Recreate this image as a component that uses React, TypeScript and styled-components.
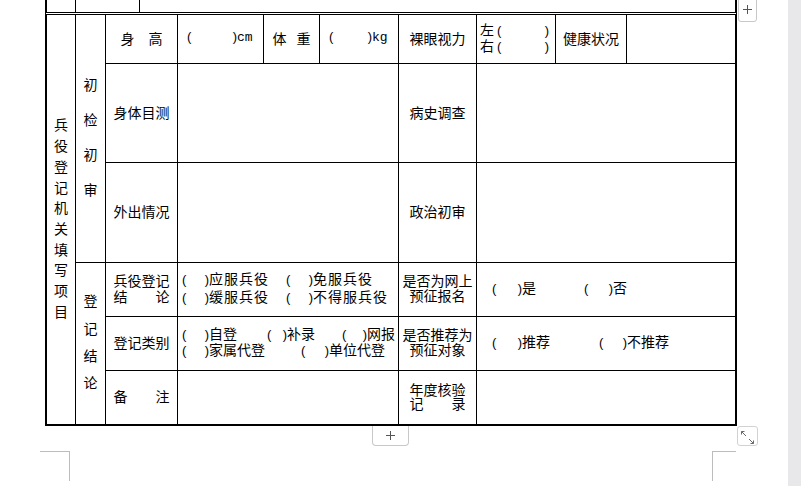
import React from 'react';
import styled, { createGlobalStyle } from 'styled-components';

const GlobalStyle = createGlobalStyle`
  html, body { margin: 0; padding: 0; background: #fff; }
  body {
    font-family: "Noto Sans CJK SC", "Noto Sans", sans-serif;
    color: #000;
  }
`;

const Frame = styled.div`
  display: flex;
  width: 801px;
  height: 486px;
  overflow: hidden;
  background: #fff;
`;

const Canvas = styled.div`
  position: relative;
  flex: 1;
  padding-left: 45px;
`;

const Scrollbar = styled.div`
  width: 13px;
  flex: none;
  background: #e8e8eb;
`;

const Doc = styled.div`
  width: 692px;
`;

const Stub = styled.div`
  display: flex;
  height: 15px;
  box-sizing: border-box;
  border-left: 2px solid #000;
  border-right: 2px solid #000;
  border-bottom: 3px double #000;
`;

const StubCell = styled.div<{ $w?: number }>`
  box-sizing: border-box;
  ${({ $w }) => ($w ? `width: ${$w}px; flex: none; border-right: 1px solid #000;` : 'flex: 1;')}
`;

const Sheet = styled.div`
  display: grid;
  grid-template-columns: 29px 30px 72px 86px 56px 79px 78px 79px 71px 108px;
  grid-template-rows: 49px 99px 100px 54px 54px 53px;
  width: 692px;
  box-sizing: border-box;
  border-left: 2px solid #000;
  border-right: 2px solid #000;
  border-bottom: 2px solid #000;
`;

const Cell = styled.div<{ $c: string; $r: string; $noR?: boolean; $noB?: boolean; $left?: boolean }>`
  grid-column: ${(p) => p.$c};
  grid-row: ${(p) => p.$r};
  box-sizing: border-box;
  padding-bottom: 3px;
  border-right: ${(p) => (p.$noR ? 'none' : '1px solid #000')};
  border-bottom: ${(p) => (p.$noB ? 'none' : '1px solid #000')};
  display: flex;
  align-items: center;
  justify-content: ${(p) => (p.$left ? 'flex-start' : 'center')};
  font-size: 14px;
  white-space: nowrap;
  overflow: hidden;
`;

const Label = styled.div<{ $lh?: number }>`
  display: flex;
  flex-direction: column;
  align-items: center;
  line-height: ${(p) => p.$lh ?? 20}px;
`;

const VText = styled.div<{ $lh: number }>`
  width: 14px;
  white-space: normal;
  word-break: break-all;
  text-align: center;
  line-height: ${(p) => p.$lh}px;
`;

const Choices = styled.div<{ $pad: number; $lh: number; $ls?: number }>`
  display: flex;
  flex-direction: column;
  padding-left: ${(p) => p.$pad}px;
  line-height: ${(p) => p.$lh}px;
  letter-spacing: ${(p) => p.$ls ?? 0}px;
`;

const Line = styled.div`
  display: flex;
  align-items: baseline;
`;

const Paren = styled.span<{ $w: number }>`
  display: inline-flex;
  flex: none;
  justify-content: space-between;
  width: ${(p) => p.$w}px;
  letter-spacing: 0;
  font-family: "Liberation Sans", sans-serif;
  font-size: 13px;
`;

const Gap = styled.span<{ $w: number }>`
  display: inline-block;
  flex: none;
  width: ${(p) => p.$w}px;
`;

const Unit = styled.span`
  font-family: "Liberation Mono", monospace;
  font-size: 13px;
`;

const ColAdd = styled.div`
  position: absolute;
  left: 738px;
  top: -15px;
  width: 19px;
  height: 37px;
  box-sizing: border-box;
  border: 1px solid #c8c8c8;
  border-radius: 3px;
  background: #fff;
  display: flex;
  align-items: center;
  justify-content: center;
`;

const RowAdd = styled.div`
  position: absolute;
  left: 372px;
  top: 426px;
  width: 37px;
  height: 20px;
  box-sizing: border-box;
  border: 1px solid #c8c8c8;
  border-top: none;
  border-radius: 0 0 4px 4px;
  background: #fff;
  display: flex;
  align-items: center;
  justify-content: center;
`;

const Resize = styled.div`
  position: absolute;
  left: 737px;
  top: 426px;
  width: 21px;
  height: 20px;
  box-sizing: border-box;
  border: 1px solid #d2d2d2;
  border-radius: 3px;
  background: #fff;
`;

const CropMark = styled.div<{ $side: 'left' | 'right' }>`
  position: absolute;
  top: 451px;
  height: 30px;
  box-sizing: border-box;
  border-top: 1px solid #bcbcbc;
  ${(p) =>
    p.$side === 'left'
      ? 'left: 40px; width: 30px; border-right: 1px solid #bcbcbc;'
      : 'left: 712px; width: 24px; border-left: 1px solid #bcbcbc;'}
`;

const PlusSlot = styled.span`
  display: flex;
  margin-top: 12px;
`;

const P = ({ w }: { w: number }) => (
  <Paren $w={w}>
    <span>(</span>
    <span>)</span>
  </Paren>
);

const Plus = () => (
  <svg width="9" height="9" viewBox="0 0 9 9">
    <path d="M0 4.5H9M4.5 0V9" stroke="#555" strokeWidth="1" />
  </svg>
);

export default function App() {
  return (
    <>
      <GlobalStyle />
      <Frame>
        <Canvas>
          <Doc>
            <Stub>
              <StubCell $w={29} />
              <StubCell $w={64} />
              <StubCell />
            </Stub>
            <Sheet>
              <Cell $c="1" $r="1 / 7" $noB>
                <VText $lh={20.7}>兵役登记机关填写项目</VText>
              </Cell>
              <Cell $c="2" $r="1 / 4">
                <VText $lh={35}>初检初审</VText>
              </Cell>
              <Cell $c="2" $r="4 / 7" $noB>
                <VText $lh={27.3}>登记结论</VText>
              </Cell>

              {/* row 1 */}
              <Cell $c="3" $r="1">
                <Label>身　高</Label>
              </Cell>
              <Cell $c="4" $r="1" $left>
                <Choices $pad={9} $lh={20}>
                  <Line>
                    <P w={50} />
                    <Unit>cm</Unit>
                  </Line>
                </Choices>
              </Cell>
              <Cell $c="5" $r="1">
                <Line>
                  体<Gap $w={10} />重
                </Line>
              </Cell>
              <Cell $c="6" $r="1" $left>
                <Choices $pad={9} $lh={20}>
                  <Line>
                    <P w={43} />
                    <Unit>kg</Unit>
                  </Line>
                </Choices>
              </Cell>
              <Cell $c="7" $r="1">
                <Label>裸眼视力</Label>
              </Cell>
              <Cell $c="8" $r="1" $left>
                <Choices $pad={3} $lh={14}>
                  <Line>
                    左<Gap $w={3} />
                    <P w={52} />
                  </Line>
                  <Line>
                    右<Gap $w={3} />
                    <P w={52} />
                  </Line>
                </Choices>
              </Cell>
              <Cell $c="9" $r="1">
                <Label>健康状况</Label>
              </Cell>
              <Cell $c="10" $r="1" $noR />

              {/* row 2 */}
              <Cell $c="3" $r="2">
                <Label>身体目测</Label>
              </Cell>
              <Cell $c="4 / 7" $r="2" />
              <Cell $c="7" $r="2">
                <Label>病史调查</Label>
              </Cell>
              <Cell $c="8 / 11" $r="2" $noR />

              {/* row 3 */}
              <Cell $c="3" $r="3">
                <Label>外出情况</Label>
              </Cell>
              <Cell $c="4 / 7" $r="3" />
              <Cell $c="7" $r="3">
                <Label>政治初审</Label>
              </Cell>
              <Cell $c="8 / 11" $r="3" $noR />

              {/* row 4 */}
              <Cell $c="3" $r="4">
                <Label $lh={16}>
                  <span>兵役登记</span>
                  <span>结　　论</span>
                </Label>
              </Cell>
              <Cell $c="4 / 7" $r="4" $left>
                <Choices $pad={4} $lh={16} $ls={1}>
                  <Line>
                    <P w={27} />
                    应服兵役
                    <Gap $w={17} />
                    <P w={27} />
                    免服兵役
                  </Line>
                  <Line>
                    <P w={27} />
                    缓服兵役
                    <Gap $w={17} />
                    <P w={27} />
                    不得服兵役
                  </Line>
                </Choices>
              </Cell>
              <Cell $c="7" $r="4">
                <Label $lh={15}>
                  <span>是否为网上</span>
                  <span>预征报名</span>
                </Label>
              </Cell>
              <Cell $c="8 / 11" $r="4" $noR $left>
                <Choices $pad={15} $lh={20}>
                  <Line>
                    <P w={30} />
                    是
                    <Gap $w={48} />
                    <P w={29} />
                    否
                  </Line>
                </Choices>
              </Cell>

              {/* row 5 */}
              <Cell $c="3" $r="5">
                <Label>登记类别</Label>
              </Cell>
              <Cell $c="4 / 7" $r="5" $left>
                <Choices $pad={4} $lh={15}>
                  <Line>
                    <P w={27} />
                    自登
                    <Gap $w={30} />
                    <P w={20} />
                    补录
                    <Gap $w={27} />
                    <P w={25} />
                    网报
                  </Line>
                  <Line>
                    <P w={27} />
                    家属代登
                    <Gap $w={36} />
                    <P w={28} />
                    单位代登
                  </Line>
                </Choices>
              </Cell>
              <Cell $c="7" $r="5">
                <Label $lh={15}>
                  <span>是否推荐为</span>
                  <span>预征对象</span>
                </Label>
              </Cell>
              <Cell $c="8 / 11" $r="5" $noR $left>
                <Choices $pad={15} $lh={20}>
                  <Line>
                    <P w={30} />
                    推荐
                    <Gap $w={49} />
                    <P w={28} />
                    不推荐
                  </Line>
                </Choices>
              </Cell>

              {/* row 6 */}
              <Cell $c="3" $r="6" $noB>
                <Label>备　　注</Label>
              </Cell>
              <Cell $c="4 / 7" $r="6" $noB />
              <Cell $c="7" $r="6" $noB>
                <Label $lh={14}>
                  <span>年度核验</span>
                  <span>记　　录</span>
                </Label>
              </Cell>
              <Cell $c="8 / 11" $r="6" $noR $noB />
            </Sheet>
          </Doc>

          <ColAdd>
            <PlusSlot>
              <Plus />
            </PlusSlot>
          </ColAdd>
          <RowAdd>
            <Plus />
          </RowAdd>
          <Resize>
            <svg width="19" height="18" viewBox="0 0 19 18">
              <path
                d="M8 8L3.5 3.5M3.5 3.5V6.5M3.5 3.5H6.5M11 11L15.5 15.5M15.5 15.5V12.5M15.5 15.5H12.5"
                stroke="#6a6a6a"
                strokeWidth="1"
                fill="none"
              />
            </svg>
          </Resize>
          <CropMark $side="left" />
          <CropMark $side="right" />
        </Canvas>
        <Scrollbar />
      </Frame>
    </>
  );
}
